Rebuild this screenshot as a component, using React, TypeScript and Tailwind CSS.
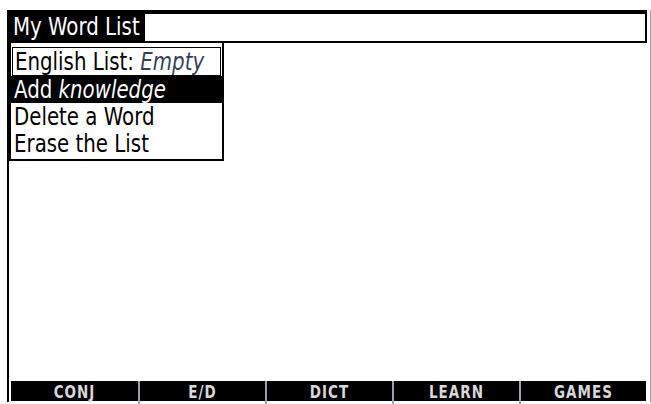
export default function App() {
  const tabs = ["CONJ", "E/D", "DICT", "LEARN", "GAMES"];
  return (
    <div className="w-[651px] h-[404px] bg-white overflow-hidden font-['DejaVu_Sans_Condensed','DejaVu_Sans',sans-serif]">
      <div className="ml-[7px] mt-[10px] w-[644px] h-[392px] border-l-2 border-black border-r border-r-gray-400 flex flex-col">
        {/* Title row */}
        <div className="flex h-[33px] mr-[3px]">
          <div className="w-[134px] bg-black text-white text-[22px] leading-[33px] pl-[4px] whitespace-nowrap">
            <span className="inline-block scale-y-[115%]">My Word List</span>
          </div>
          <div className="flex-1 border-2 border-t-[4px] border-black bg-white" />
        </div>

        {/* Menu */}
        <div className="w-[215px] border-2 border-t-0 border-black text-[22px] leading-[27px] text-black">
          <div className="border border-black mx-[1px] mt-[4px] pl-[2px] whitespace-nowrap">
            <span className="inline-block scale-y-[115%]">
              English List: <i className="text-gray-700">Empty</i>
            </span>
          </div>
          <div className="bg-black text-white pl-[3px] whitespace-nowrap">
            <span className="inline-block scale-y-[115%]">
              Add <i>knowledge</i>
            </span>
          </div>
          <div className="pl-[3px] whitespace-nowrap">
            <span className="inline-block scale-y-[115%]">Delete a Word</span>
          </div>
          <div className="pl-[3px] pb-[2px] whitespace-nowrap">
            <span className="inline-block scale-y-[115%]">Erase the List</span>
          </div>
        </div>

        <div className="flex-1" />

        {/* Bottom soft-key bar */}
        <div className="h-[20px] ml-[2px] mr-[4px] mb-[1px] bg-black grid grid-cols-5">
          {tabs.map((t, i) => (
            <div
              key={t}
              className={
                "flex items-center justify-center text-[#d8d8d8] font-bold text-[15px] tracking-[1px] " +
                (i > 0 ? "border-l-2 border-gray-400" : "")
              }
            >
              <span className="inline-block scale-y-[115%]">{t}</span>
            </div>
          ))}
        </div>
      </div>
    </div>
  );
}
